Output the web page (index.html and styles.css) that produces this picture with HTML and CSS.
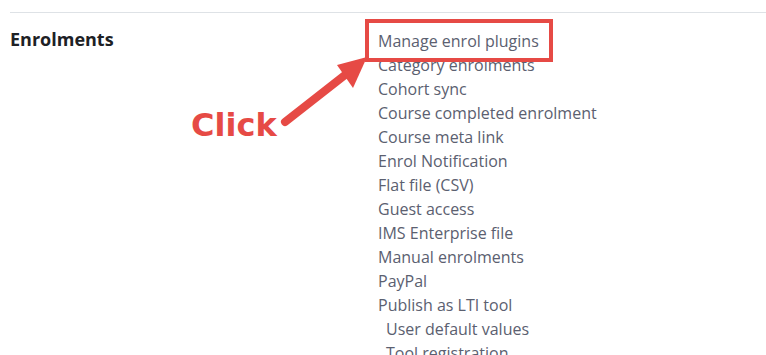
FILE: index.html
```html
<!DOCTYPE html>
<html>
<head>
<meta charset="utf-8">
<link rel="stylesheet" href="styles.css">
</head>
<body>
<div class="page">
  <hr class="rule">
  <div class="row">
    <div class="label">Enrolments</div>
    <ul class="links">
      <li><a>Manage enrol plugins</a></li>
      <li><a>Category enrolments</a></li>
      <li><a>Cohort sync</a></li>
      <li><a>Course completed enrolment</a></li>
      <li><a>Course meta link</a></li>
      <li><a>Enrol Notification</a></li>
      <li><a>Flat file (CSV)</a></li>
      <li><a>Guest access</a></li>
      <li><a>IMS Enterprise file</a></li>
      <li><a>Manual enrolments</a></li>
      <li><a>PayPal</a></li>
      <li><a>Publish as LTI tool</a></li>
      <li class="sub"><a>User default values</a></li>
      <li class="sub"><a>Tool registration</a></li>
    </ul>
  </div>
  <div class="highlight"></div>
  <svg class="arrow" width="200" height="100" viewBox="0 0 200 100">
    <line x1="105" y1="92" x2="165" y2="45" stroke="#e64a45" stroke-width="8" stroke-linecap="round"/>
    <polygon points="187,27 157,35 173,58" fill="#e64a45"/>
  </svg>
  <div class="click">Click</div>
</div>
</body>
</html>
```
FILE: styles.css
```css
html, body {
  margin: 0;
  padding: 0;
  background: #ffffff;
}
.page {
  position: relative;
  padding-left: 10px;
  font-family: "Open Sans", "Liberation Sans", sans-serif;
  height: 355px;
  overflow: hidden;
}
.rule {
  margin: 12px 0 0 0;
  border: 0;
  border-top: 1px solid #dee2e6;
  height: 0;
}
.row {
  display: flex;
  padding-top: 16px;
}
.label {
  width: 368px;
  flex: none;
  font-weight: 700;
  font-size: 18px;
  color: #1d2125;
  line-height: 20px;
}
.links {
  list-style: none;
  margin: 0;
  padding: 0;
  font-size: 16px;
  line-height: 24px;
  color: #5b6070;
}
.links .sub {
  padding-left: 8px;
}
.highlight {
  position: absolute;
  left: 365px;
  top: 19px;
  width: 180px;
  height: 35px;
  border: 4px solid #e64a45;
}
.arrow {
  position: absolute;
  left: 180px;
  top: 30px;
}
.click {
  position: absolute;
  left: 191px;
  top: 105px;
  font-family: "DejaVu Sans", Verdana, sans-serif;
  font-weight: 700;
  font-size: 32px;
  line-height: 40px;
  color: #e64a45;
}
```
